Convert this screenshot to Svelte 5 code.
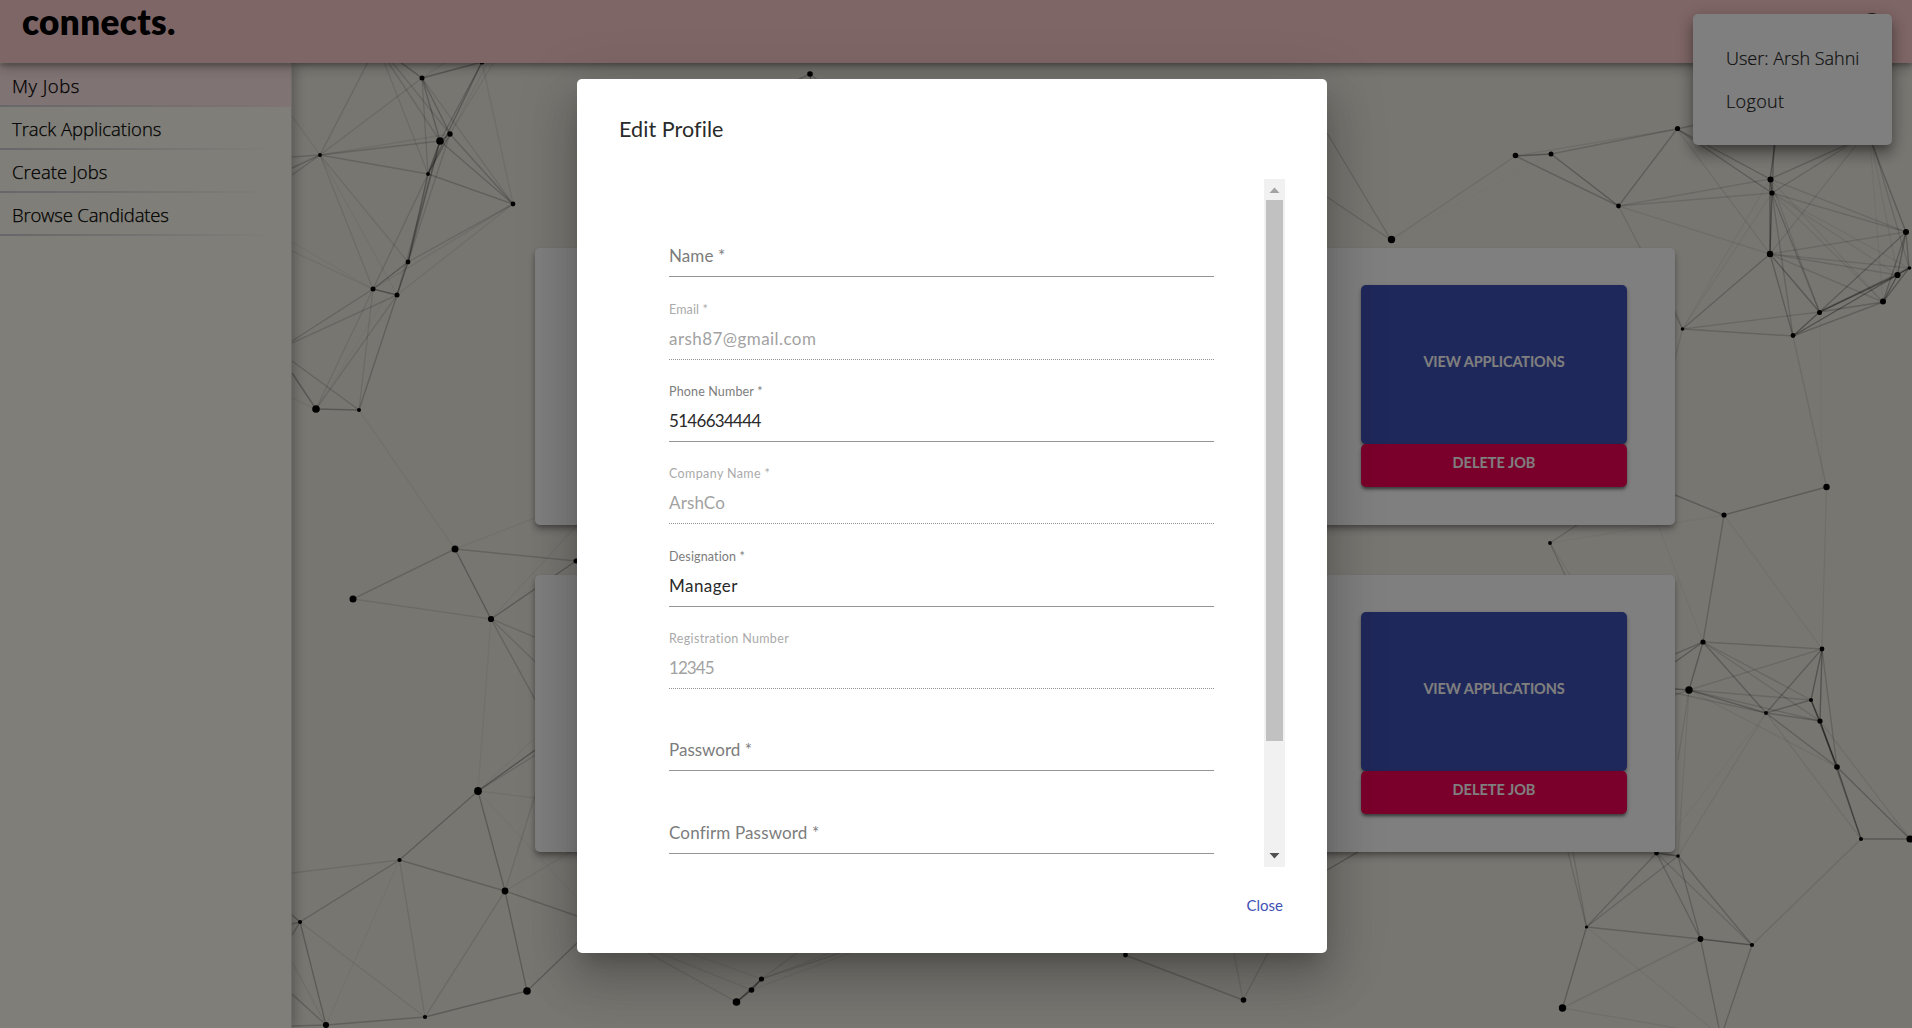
<script>
  // Background constellation: [x, y, radius]
  const dots = [
    [422,78,2.5],[482,62,2.5],[450,134,2.7],[440,141,3.8],[320,155,1.9],[428,174,1.9],[513,204,2.4],[408,262,2.4],[373,289,2.5],[397,295,2.5],[316,409,3.8],[359,410,2],
    [455,549,3.5],[353,599,3.5],[491,619,3.1],[576,561,2.5],[478,791,3.9],[399.5,860,2.1],[505,891,3.4],[300,922,2.1],[527,991,3.8],[425,1017,2.1],[326,1025,3.1],
    [810,74,2.8],[1391.5,239.5,3.7],[1515.5,155.5,2.8],[1551,154,2.5],[1618.5,206,2.4],[1677.5,128.5,2.6],[1770.5,179.5,3],[1772,193,2.6],[1770,254,3.2],[1906,232,3],[1909.5,268,1.8],[1897.5,275,3.1],[1883,301.5,3],[1819.5,312.5,2.5],[1793,335.5,2.4],[1682.5,329,1.8],
    [1826.5,487,3.2],[1724,515,2.6],[1550,543,1.9],[1703,642,2.6],[1822,649,2.4],[1689,690,3.7],[1811,700,2],[1766,713,1.9],[1820,721,2.6],[1837,767,2.8],[1861,839,2],[1910,839,3.6],[1656.5,853,2.4],[1678,856,1.8],[1586.5,927,1.6],[1700.5,939,2.9],[1752,945,2.1],[1562.5,1008,3.7],[1243.5,1000,2.8],
    [761.5,979,2.6],[751.5,990,2.8],[736.5,1002,3.8],[1125.5,955,2.4]
  ];
  // Edges: [x1, y1, x2, y2, opacity]
  const edges = [
    [422,78,482,62,.4],[422,78,400,62,.4],[422,78,320,155,.18],[422,78,450,134,.35],[422,78,440,141,.35],[422,78,428,174,.2],[422,78,513,204,.15],[422,78,446,62,.1],
    [388,62,440,141,.2],[392,62,450,134,.2],[384,62,428,174,.15],[482,62,440,141,.3],[482,62,428,174,.4],[482,62,513,204,.12],[494,62,450,134,.12],[488,62,450,134,.1],
    [368,62,320,155,.2],[450,134,440,141,.5],[450,134,428,174,.4],[440,141,428,174,.5],[440,141,513,204,.3],[450,134,513,204,.3],[428,174,513,204,.3],
    [320,155,440,141,.25],[320,155,450,134,.12],[320,155,428,174,.25],[320,155,408,262,.15],[320,155,373,289,.15],[320,155,397,295,.08],[320,155,292,157,.25],[320,155,292,168,.3],[320,155,292,175,.25],[320,155,292,116,.1],
    [428,174,408,262,.45],[450,134,408,262,.2],[440,141,408,262,.4],[428,174,373,289,.2],[440,141,397,295,.2],[513,204,408,262,.2],[513,204,373,289,.12],[513,204,397,295,.12],
    [408,262,373,289,.4],[408,262,397,295,.5],[373,289,397,295,.5],[373,289,292,341,.25],[397,295,292,343,.2],[373,289,316,409,.15],[373,289,359,410,.15],[397,295,359,410,.3],[397,295,316,409,.18],[408,262,316,409,.05],[373,289,292,251,.1],[373,289,292,242,.06],
    [316,409,359,410,.4],[316,409,292,373,.4],[359,410,292,361,.25],[316,409,292,398,.08],[359,410,455,549,.08],
    [455,549,353,599,.25],[455,549,491,619,.4],[455,549,576,561,.25],[455,549,535,518,.08],[353,599,491,619,.15],[491,619,576,561,.35],[491,619,578,655,.2],[491,619,590,715,.2],[491,619,560,745,.25],[491,619,478,791,.08],[491,619,577,525,.07],
    [478,791,399.5,860,.35],[478,791,505,891,.35],[478,791,577,720,.45],[478,791,577,729,.2],[478,791,577,699,.06],[478,791,577,803,.1],[478,791,577,898,.05],
    [399.5,860,300,922,.3],[399.5,860,505,891,.3],[399.5,860,292,873,.15],[399.5,860,425,1017,.15],[399.5,860,326,1025,.06],[505,891,577,916,.3],[505,891,527,991,.35],[505,891,425,1017,.16],[505,891,560,716,.15],[505,891,577,848,.1],
    [300,922,326,1025,.35],[300,922,425,1017,.12],[300,922,292,915,.4],[300,922,292,924,.35],[300,922,292,935,.35],[326,1025,425,1017,.3],[326,1025,292,994,.3],[326,1025,292,962,.1],[326,1025,292,1026,.3],[425,1017,527,991,.35],[527,991,577,943,.35],
    [810,74,793,82,.3],[810,74,811,82,.5],[810,74,820,82,.3],[1391,240,1327,133,.22],[1391,240,1327,197,.22],[1391,240,1515.5,156,.15],[1391,240,1551,154,.03],
    [1515.5,156,1551,154,.45],[1515.5,156,1618.5,206,.3],[1515.5,156,1677,129,.12],[1551,154,1677,129,.25],[1551,154,1618.5,206,.4],[1618.5,206,1677,129,.32],[1618.5,206,1770,179,.18],[1618.5,206,1772,193,.18],[1618.5,206,1770,254,.12],[1618.5,206,1682.5,329,.18],
    [1677,129,1770,179,.35],[1677,129,1772,193,.35],[1677,129,1770,254,.12],[1677,129,1695,125,.3],[1770,179,1775,145,.45],[1772,193,1774,145,.4],[1770,179,1772,193,.5],[1770,179,1846,145,.3],[1772,193,1852,143,.25],[1770,254,1857,144,.14],
    [1770,179,1770,254,.45],[1772,193,1770,254,.5],[1770,179,1906,232,.18],[1772,193,1906,232,.2],[1772,193,1909,268,.1],[1772,193,1897.5,275,.12],[1772,193,1883,302,.12],[1770,179,1883,302,.1],[1772,193,1819.5,312,.3],[1770,179,1819.5,312,.15],[1772,193,1793,336,.25],[1770,179,1682.5,329,.07],[1772,193,1682.5,329,.08],
    [1770,254,1906,232,.18],[1770,254,1909,268,.18],[1770,254,1897.5,275,.2],[1770,254,1883,302,.2],[1770,254,1819.5,312,.4],[1770,254,1793,336,.35],[1770,254,1682.5,329,.3],
    [1906,232,1870,139,.35],[1909,268,1872,140,.2],[1897.5,275,1871,140,.1],[1883,302,1869,130,.07],[1906,232,1909,268,.35],[1906,232,1897.5,275,.4],[1906,232,1883,302,.35],[1906,232,1819.5,312,.35],[1909,268,1897.5,275,.5],[1909,268,1883,302,.4],[1909,268,1819.5,312,.3],[1909,268,1793,336,.25],[1897.5,275,1883,302,.5],[1897.5,275,1819.5,312,.5],[1897.5,275,1793,336,.3],[1883,302,1819.5,312,.3],[1883,302,1793,336,.3],[1819.5,312,1793,336,.5],[1819.5,312,1682.5,329,.2],[1793,336,1682.5,329,.25],
    [1682.5,329,1655,435,.14],[1793,336,1826.5,487,.15],[1820,312,1822,487,.05],[1682.5,329,1675,311,.2],[1724,515,1675,495,.35],[1724,515,1826.5,487,.35],[1724,515,1703,642,.3],[1724,515,1822,649,.08],[1724,515,1550,543,.05],[1826.5,487,1822,649,.1],[1550,543,1577,525,.25],[1550,543,1565,575,.25],[1550,543,1570,575,.1],[1658,525,1703,642,.06],
    [1703,642,1675,654,.3],[1703,642,1675,662,.4],[1703,642,1822,649,.25],[1703,642,1689,690,.4],[1703,642,1766,713,.35],[1703,642,1811,700,.2],[1703,642,1820,721,.2],[1822,649,1689,690,.18],[1822,649,1766,713,.35],[1822,649,1811,700,.45],[1822,649,1820,721,.45],[1822,649,1837,767,.25],
    [1689,690,1675,689,.5],[1689,690,1675,695,.2],[1689,690,1811,700,.2],[1689,690,1766,713,.35],[1689,690,1820,721,.2],[1689,690,1678,856,.1],[1689,690,1678,760,.15],[1689,690,1837,767,.1],[1675,693,1766,713,.2],[1766,713,1811,700,.35],[1766,713,1820,721,.3],[1766,713,1837,767,.3],[1766,713,1861,839,.12],[1766,713,1678,856,.1],[1766,713,1656.5,853,.05],
    [1811,700,1820,721,.5],[1820,721,1837,767,.6],[1820,721,1861,839,.3],[1820,721,1910,839,.12],[1811,700,1837,767,.5],[1837,767,1861,839,.5],[1837,767,1910,839,.35],[1861,839,1910,839,.4],[1861,839,1752,945,.16],
    [1656.5,853,1678,856,.5],[1656.5,853,1586.5,927,.3],[1678,856,1586.5,927,.25],[1656.5,853,1700.5,939,.3],[1678,856,1700.5,939,.3],[1656.5,853,1752,945,.2],[1678,856,1752,945,.3],[1586.5,927,1568,852,.2],[1586.5,927,1573,852,.2],[1586.5,927,1700.5,939,.3],[1700.5,939,1752,945,.5],[1586.5,927,1562.5,1008,.35],[1562.5,1008,1700.5,939,.14],[1562.5,1008,1676,1028,.1],[1586.5,927,1711,1028,.08],[1700.5,939,1719,1028,.3],[1752,945,1724,1028,.3],
    [1327,870,1358,852,.4],[1243,1000,1125,955,.3],[1243,1000,1234,953,.15],[1243,1000,1268,953,.2],[736.5,1002,751.5,990,.6],[751.5,990,761.5,979,.6],[736.5,1002,761.5,979,.4],[736.5,1002,648,953,.18],[751.5,990,660,953,.1],[761.5,979,690,953,.08],[761.5,979,797,953,.15],[761.5,979,840,953,.18],[751.5,990,850,953,.08],[761.5,979,830,953,.1]
  ];
  // `fit` is the tracking, in px, of each text
  const nav = [
    { text: 'My Jobs', fit: 0.5 },
    { text: 'Track Applications', fit: -0.04 },
    { text: 'Create Jobs', fit: 0.05 },
    { text: 'Browse Candidates', fit: -0.18 }
  ];
  const fields = [
    { label: 'Name *', labelFit: 0.1 },
    { label: 'Email *', labelFit: 0.14, value: 'arsh87@gmail.com', fit: 0.44, disabled: true },
    { label: 'Phone Number *', labelFit: 0.16, value: '5146634444', fit: -0.7 },
    { label: 'Company Name *', labelFit: 0.38, value: 'ArshCo', fit: 0.15, disabled: true },
    { label: 'Designation *', labelFit: 0.15, value: 'Manager', fit: 0.45 },
    { label: 'Registration Number', labelFit: 0.34, value: '12345', fit: -0.95, disabled: true },
    { label: 'Password *', labelFit: 0 },
    { label: 'Confirm Password *', labelFit: 0.15 }
  ];
</script>

<div class="page">
  <svg class="web" viewBox="0 0 1912 1028" aria-hidden="true">
    {#each edges as [x1, y1, x2, y2, o]}
      <line {x1} {y1} {x2} {y2} stroke="#000" stroke-width="1.4" stroke-opacity={o * 0.66} />
    {/each}
    {#each dots as [cx, cy, r]}
      <circle {cx} {cy} {r} />
    {/each}
  </svg>
  <header><span class="logo">connects.</span></header>
  <div class="body">
    <nav>
      {#each nav as item, i}
        <div class="item" class:active={i === 0} style:letter-spacing="{item.fit}px">{item.text}</div>
      {/each}
    </nav>
    <main>
      {#each [0, 1] as card (card)}
        <article>
          <div class="actions">
            <button class="view">VIEW APPLICATIONS</button>
            <button class="delete">DELETE JOB</button>
          </div>
        </article>
      {/each}
    </main>
  </div>
  <svg class="avatar" viewBox="0 0 24 24" aria-hidden="true"><circle cx="12" cy="12" r="11" /></svg>
  <div class="menu">
    <span>User: Arsh Sahni</span>
    <span>Logout</span>
  </div>
  <div class="backdrop">
    <section class="dialog">
      <h2>Edit Profile</h2>
      <div class="content">
        <form>
          {#each fields as f}
            <div class="field" class:disabled={f.disabled}>
              {#if f.value}
                <div class="small" style:letter-spacing="{f.labelFit}px">{f.label}</div>
                <div class="value" style:letter-spacing="{f.fit}px">{f.value}</div>
              {:else}
                <div class="empty" style:letter-spacing="{f.labelFit}px">{f.label}</div>
              {/if}
            </div>
          {/each}
        </form>
        <div class="scrollbar">
          <svg viewBox="0 0 21 21"><path d="M5.5 14h10l-5-5.5z" fill="#a3a3a3" /></svg>
          <div class="thumb"></div>
          <svg viewBox="0 0 21 21"><path d="M5.5 7h10l-5 5.5z" fill="#505050" /></svg>
        </div>
      </div>
      <footer>Close</footer>
    </section>
  </div>
</div>

<style>
  :global(body) { margin: 0; overflow: hidden; }
  .page { position: relative; width: 1912px; height: 1028px; overflow: hidden; background: #f0ede3; font-family: Lato, sans-serif; display: flex; flex-direction: column; }
  .web { position: absolute; inset: 0; width: 1912px; height: 1028px; }
  header { position: relative; z-index: 2; height: 63px; box-sizing: border-box; padding: 0 22px; background: #ffcdcd; box-shadow: 0 2px 5px rgba(0,0,0,.3), 0 5px 12px rgba(0,0,0,.22); }
  .logo { display: block; font: 800 35px/42px Lato, sans-serif; letter-spacing: .4px; color: #000; }
  .body { position: relative; flex: 1; display: flex; }
  nav { width: 292px; padding-top: 1px; box-sizing: border-box; background: #fffdf1; border-right: 1px solid #dcdad0; box-shadow: 2px 0 12px rgba(0,0,0,.3); font: 300 18.5px/43px 'Open Sans', sans-serif; color: #000; -webkit-text-stroke: .25px #000; }
  .item { height: 43px; box-sizing: border-box; padding-left: 12px; background: linear-gradient(90deg, #cfced2, rgba(207,206,210,0) 96%) bottom / 100% 2px no-repeat; }
  .item.active { background-color: #ffe6e6; }
  main { display: flex; flex-direction: column; gap: 50px; padding: 185px 0 0 243px; }
  article { width: 1140px; height: 277px; box-sizing: border-box; padding: 37px 48px 38px; display: flex; justify-content: flex-end; background: #fff; border-radius: 5px; box-shadow: 0 3px 5px -1px rgba(0,0,0,.3), 0 5px 9px rgba(0,0,0,.2); }
  .actions { width: 266px; display: flex; flex-direction: column; }
  button { border: 0; border-radius: 5px; color: #fff; font: 700 14.5px/20px Lato, sans-serif; letter-spacing: -.12px; box-shadow: 0 3px 3px -1px rgba(0,0,0,.4), 0 2px 5px rgba(0,0,0,.25); }
  .view { height: 159px; background: #3f51b5; padding: 0 0 5px; }
  .delete { height: 43px; background: #f50057; padding: 0 0 5px; letter-spacing: 0; }
  .avatar { position: absolute; z-index: 3; left: 1857px; top: 12px; width: 30px; height: 30px; }
  .menu { position: absolute; z-index: 4; left: 1693px; top: 14px; width: 199px; height: 131px; box-sizing: border-box; padding: 23px 33px; display: flex; flex-direction: column; background: #fff; border-radius: 5px; box-shadow: 0 6px 7px -3px rgba(0,0,0,.25), 0 10px 14px 1px rgba(0,0,0,.2), 0 4px 18px 2px rgba(0,0,0,.18); font: 300 18px/43px 'Open Sans', sans-serif; color: #222; -webkit-text-stroke: .2px #222; white-space: nowrap; }
  .menu span:last-child { letter-spacing: .35px; }
  .backdrop { position: absolute; z-index: 5; inset: 0; background: rgba(0,0,0,.5); display: flex; padding: 79px 0 0 577px; box-sizing: border-box; align-items: flex-start; }
  .dialog { width: 750px; height: 874px; box-sizing: border-box; display: flex; flex-direction: column; background: #fff; border-radius: 5px; padding: 0 42px; box-shadow: 0 13px 18px -8px rgba(0,0,0,.2), 0 29px 46px 4px rgba(0,0,0,.14), 0 11px 56px 10px rgba(0,0,0,.12); }
  h2 { margin: 0; height: 100px; font: 400 21.5px/100px Lato, sans-serif; letter-spacing: .08px; color: #2a2a2a; }
  .content { height: 688px; display: flex; }
  form { width: 545px; margin: 0 50px; padding-top: 16px; }
  .field { height: 82.33px; box-sizing: border-box; display: flex; flex-direction: column; justify-content: flex-end; border-bottom: 1px solid #949494; color: #2a2a2a; white-space: nowrap; }
  .disabled { border-bottom-style: dotted; color: #a2a2a2; }
  .small { font-size: 12.5px; line-height: 16px; margin-bottom: 9px; color: #7c7c7c; }
  .disabled .small { color: #aaa; }
  .value { font-size: 17px; line-height: 24px; margin-bottom: 8px; }
  .empty { font-size: 17px; line-height: 24px; margin-bottom: 8px; color: #7c7c7c; }
  .scrollbar { width: 21px; margin-left: auto; background: #f1f1f1; display: flex; flex-direction: column; }
  .scrollbar svg { width: 21px; height: 21px; }
  .scrollbar svg:last-child { margin-top: auto; }
  .thumb { width: 17px; height: 541px; margin-left: 2px; background: #c1c1c1; }
  footer { text-align: right; font: 400 15px/77px Lato, sans-serif; color: #3f51b5; padding-right: 2px; }
</style>
